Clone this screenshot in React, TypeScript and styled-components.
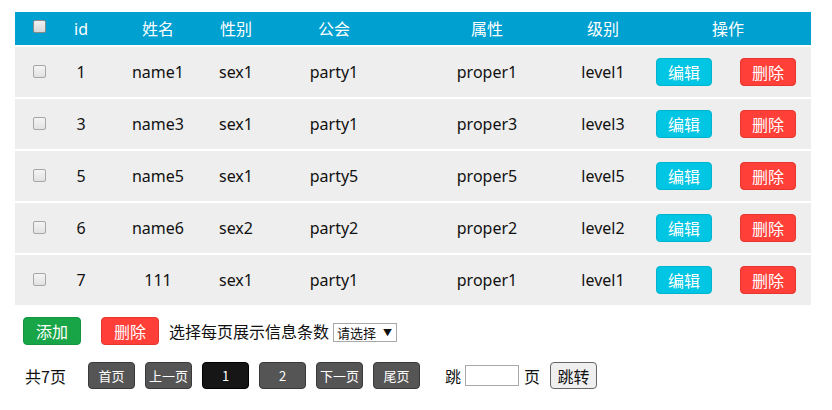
import React from "react";
import styled, { createGlobalStyle } from "styled-components";

const Global = createGlobalStyle`
  html, body { margin: 0; padding: 0; background: #fff; }
  body { font-family: "Noto Sans", "Noto Sans CJK SC", sans-serif; font-size: 16px; color: #111; }
`;

const COLS = "48px 36px 118px 38px 158px 148px 84px 166px";

const Page = styled.div`
  padding: 12px 0 0 15px;
  width: 796px;
`;

const Table = styled.div`
  display: flex;
  flex-direction: column;
  gap: 2px;
`;

const Row = styled.div<{ $head?: boolean }>`
  display: grid;
  grid-template-columns: ${COLS};
  height: ${(p) => (p.$head ? "33px" : "50px")};
  background: ${(p) => (p.$head ? "#00a0d0" : "#eeeeee")};
  color: ${(p) => (p.$head ? "#fff" : "#111")};
  align-items: center;
  font-size: 16px;
`;

const Cell = styled.div`
  text-align: center;
  white-space: nowrap;
  line-height: 20px;
`;

const ActionCell = styled.div`
  display: flex;
  gap: 28px;
  padding-left: 11px;
`;

const Check = styled.span<{ $head?: boolean }>`
  display: block;
  width: 11px;
  height: 11px;
  margin: 0 0 0 18px;
  border: 1px solid ${(p) => (p.$head ? "#8a8a8a" : "#a6a6a6")};
  border-radius: 2px;
  background: ${(p) =>
    p.$head ? "linear-gradient(#f2f2f2, #d8d8d8)" : "linear-gradient(#f4f4f4, #e2e2e2)"};
  position: relative;
  top: ${(p) => (p.$head ? "-2px" : "-1px")};
`;

const Btn = styled.button<{ $color: string; $border: string; $wide?: boolean }>`
  width: ${(p) => (p.$wide ? "58px" : "56px")};
  height: 28px;
  border-radius: 4px;
  border: 1px solid ${(p) => p.$border};
  background: ${(p) => p.$color};
  color: #fff;
  font-family: "Noto Sans CJK SC", sans-serif;
  font-size: 16px;
  line-height: 26px;
  padding: 0;
  cursor: pointer;
`;

const Toolbar = styled.div`
  display: flex;
  align-items: center;
  gap: 20px;
  margin-top: 12px;
  height: 28px;
  padding-left: 8px;
`;

const SizeChooser = styled.div`
  display: flex;
  align-items: center;
  margin-left: -10px;
`;

const Label = styled.span`
  font-family: "Noto Sans CJK SC", sans-serif;
  font-size: 16px;
  margin-right: 4px;
  white-space: nowrap;
`;

const FakeSelect = styled.div`
  display: flex;
  align-items: center;
  justify-content: space-between;
  box-sizing: border-box;
  width: 64px;
  height: 19px;
  border: 1px solid #a9a9a9;
  padding: 0 4px 0 3px;
  font-family: "Noto Sans CJK SC", sans-serif;
  font-size: 13px;
  background: #fff;
  margin-top: 2px;
`;

const Arrow = styled.span`
  font-size: 9px;
`;

const Pager = styled.div`
  display: flex;
  align-items: center;
  margin-top: 17px;
  height: 27px;
  padding-left: 10px;
`;

const Total = styled.span`
  font-family: "Noto Sans CJK SC", sans-serif;
  font-size: 16px;
  width: 63px;
  white-space: nowrap;
`;

const PageBtns = styled.div`
  display: flex;
  gap: 10px;
`;

const PageBtn = styled.button<{ $active?: boolean }>`
  width: 47px;
  height: 27px;
  box-sizing: border-box;
  border-radius: 4px;
  border: 1px solid ${(p) => (p.$active ? "#000" : "#3a3a3a")};
  background: ${(p) => (p.$active ? "#161616" : "#555555")};
  color: #fff;
  font-family: "Noto Sans CJK SC", sans-serif;
  font-size: 13px;
  padding: 0;
`;

const Jump = styled.div`
  display: flex;
  align-items: center;
  margin-left: 25px;
  font-family: "Noto Sans CJK SC", sans-serif;
  font-size: 16px;
`;

const JumpInput = styled.input`
  box-sizing: border-box;
  width: 54px;
  height: 21px;
  border: 1px solid #a9a9a9;
  margin: 0 5px 0 4px;
  padding: 0;
`;

const JumpBtn = styled.button`
  box-sizing: border-box;
  width: 47px;
  height: 27px;
  margin-left: 10px;
  border-radius: 4px;
  border: 1px solid #666;
  background: #efefef;
  color: #111;
  font-family: "Noto Sans CJK SC", sans-serif;
  font-size: 16px;
  padding: 0;
`;

const rows = [
  ["1", "name1", "sex1", "party1", "proper1", "level1"],
  ["3", "name3", "sex1", "party1", "proper3", "level3"],
  ["5", "name5", "sex1", "party5", "proper5", "level5"],
  ["6", "name6", "sex2", "party2", "proper2", "level2"],
  ["7", "111", "sex1", "party1", "proper1", "level1"],
];

export default function App() {
  return (
    <Page>
      <Global />
      <Table>
        <Row $head>
          <Cell><Check $head /></Cell>
          <Cell>id</Cell>
          <Cell>姓名</Cell>
          <Cell>性别</Cell>
          <Cell>公会</Cell>
          <Cell>属性</Cell>
          <Cell>级别</Cell>
          <Cell>操作</Cell>
        </Row>
        {rows.map((r) => (
          <Row key={r[0]}>
            <Cell><Check /></Cell>
            {r.map((v, i) => (
              <Cell key={i}>{v}</Cell>
            ))}
            <ActionCell>
              <Btn $color="#00c5e3" $border="#00b4d0">编辑</Btn>
              <Btn $color="#ff3f38" $border="#e63631">删除</Btn>
            </ActionCell>
          </Row>
        ))}
      </Table>
      <Toolbar>
        <Btn $wide $color="#17a548" $border="#13963f">添加</Btn>
        <Btn $wide $color="#ff3f38" $border="#e63631">删除</Btn>
        <SizeChooser>
          <Label>选择每页展示信息条数</Label>
          <FakeSelect>
            <span>请选择</span>
            <Arrow>▼</Arrow>
          </FakeSelect>
        </SizeChooser>
      </Toolbar>
      <Pager>
        <Total>共7页</Total>
        <PageBtns>
          <PageBtn>首页</PageBtn>
          <PageBtn>上一页</PageBtn>
          <PageBtn $active>1</PageBtn>
          <PageBtn>2</PageBtn>
          <PageBtn>下一页</PageBtn>
          <PageBtn>尾页</PageBtn>
        </PageBtns>
        <Jump>
          跳<JumpInput />页
          <JumpBtn>跳转</JumpBtn>
        </Jump>
      </Pager>
    </Page>
  );
}
